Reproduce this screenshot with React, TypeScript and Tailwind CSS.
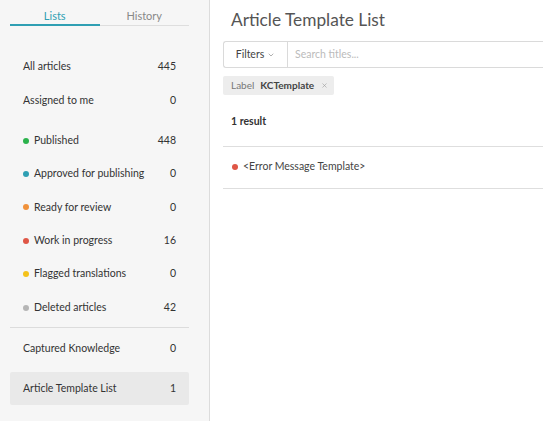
import { ChevronDown, X } from 'lucide-react';

type Item = { label: string; count: number; dot?: string };

const topItems: Item[] = [
  { label: 'All articles', count: 445 },
  { label: 'Assigned to me', count: 0 },
];

const statusItems: Item[] = [
  { label: 'Published', count: 448, dot: 'bg-[#2bb24c]' },
  { label: 'Approved for publishing', count: 0, dot: 'bg-[#2f9fb3]' },
  { label: 'Ready for review', count: 0, dot: 'bg-[#f0913a]' },
  { label: 'Work in progress', count: 16, dot: 'bg-[#df5646]' },
  { label: 'Flagged translations', count: 0, dot: 'bg-[#f4c21b]' },
  { label: 'Deleted articles', count: 42, dot: 'bg-[#b5b5b5]' },
];

function Row({ item, active, h }: { item: Item; active?: boolean; h: string }) {
  return (
    <div
      className={`flex items-center justify-between px-[13px] ${h} ${active ? 'bg-[#e9e9e9] rounded-[2px]' : ''}`}
    >
      <span className="flex items-center gap-[5px]">
        {item.dot && <span className={`w-[6px] h-[6px] rounded-full ${item.dot}`} />}
        {item.label}
      </span>
      <span>{item.count}</span>
    </div>
  );
}

export default function App() {
  return (
    <div
      className="flex w-[543px] h-[421px] overflow-hidden bg-white text-[#333] text-[10.5px]"
      style={{ fontFamily: 'Lato, "Open Sans", sans-serif' }}
    >
      {/* Sidebar */}
      <aside className="w-[210px] shrink-0 bg-[#f6f6f6] border-r border-[#dcdcdc] pl-[10px] pr-[20px]">
        <div className="flex text-[11px] leading-[12px]">
          <div className="flex-1 text-center pt-[10px] pb-[2px] text-[#2f9fb3] border-b-2 border-[#2f9fb3]">
            Lists
          </div>
          <div className="flex-1 text-center pt-[10px] pb-[3px] text-[#888] border-b border-[#dedede]">
            History
          </div>
        </div>

        <div className="mt-[24px]">
          {topItems.map((it) => (
            <Row key={it.label} item={it} h="h-[34px]" />
          ))}
        </div>

        <div className="mt-[6px] pb-[3px] border-b border-[#dcdcdc]">
          {statusItems.map((it) => (
            <Row key={it.label} item={it} h="h-[33.4px]" />
          ))}
        </div>

        <div className="pt-[4px]">
          <Row item={{ label: 'Captured Knowledge', count: 0 }} h="h-[34px]" />
          <div className="mt-[6px]">
            <Row item={{ label: 'Article Template List', count: 1 }} h="h-[33px]" active />
          </div>
        </div>
      </aside>

      {/* Main */}
      <main className="flex-1 pl-[13px]">
        <h1 className="pl-[8px] pt-[9px] text-[17.3px] leading-[22px] text-[#555]">Article Template List</h1>

        <div className="mt-[10px] flex h-[27px] border border-r-0 border-[#dadada] rounded-l-[3px]">
          <button className="w-[64px] flex items-center justify-center gap-[3px] border-r border-[#dadada] text-[#444]">
            Filters <ChevronDown size={8} strokeWidth={2} className="text-[#888]" />
          </button>
          <div className="flex items-center pl-[7px] text-[#bbb]">Search titles...</div>
        </div>

        <div className="mt-[8px] inline-flex items-center h-[19px] pl-[8px] pr-[6px] bg-[#ededed] rounded-[2px] text-[10px]">
          <span className="text-[#777]">Label</span>
          <span className="ml-[6px] font-bold text-[#444]">KCTemplate</span>
          <X size={7} strokeWidth={2} className="ml-[7px] text-[#999]" />
        </div>

        <div className="pl-[8px] pt-[19px] pb-[16px] font-bold text-[#333]">1 result</div>

        <div className="border-t border-[#dedede] h-[43px] flex items-center pl-[8px] gap-[5px] border-b">
          <span className="w-[6px] h-[6px] rounded-full bg-[#df5646] ml-[1px]" />
          <span className="text-[#444]">&lt;Error Message Template&gt;</span>
        </div>
      </main>
    </div>
  );
}
